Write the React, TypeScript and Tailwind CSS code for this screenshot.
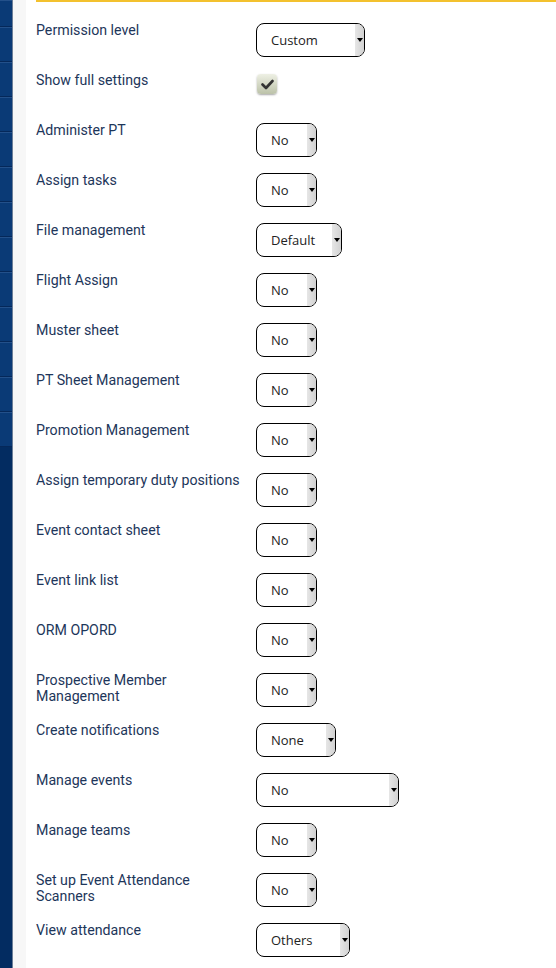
import React from "react";

type Row = { label: string; value?: string; width?: number; checkbox?: boolean };

const rows: Row[] = [
  { label: "Permission level", value: "Custom", width: 109 },
  { label: "Show full settings", checkbox: true },
  { label: "Administer PT", value: "No", width: 61 },
  { label: "Assign tasks", value: "No", width: 61 },
  { label: "File management", value: "Default", width: 86 },
  { label: "Flight Assign", value: "No", width: 61 },
  { label: "Muster sheet", value: "No", width: 61 },
  { label: "PT Sheet Management", value: "No", width: 61 },
  { label: "Promotion Management", value: "No", width: 61 },
  { label: "Assign temporary duty positions", value: "No", width: 61 },
  { label: "Event contact sheet", value: "No", width: 61 },
  { label: "Event link list", value: "No", width: 61 },
  { label: "ORM OPORD", value: "No", width: 61 },
  { label: "Prospective Member Management", value: "No", width: 61 },
  { label: "Create notifications", value: "None", width: 80 },
  { label: "Manage events", value: "No", width: 143 },
  { label: "Manage teams", value: "No", width: 61 },
  { label: "Set up Event Attendance Scanners", value: "No", width: 61 },
  { label: "View attendance", value: "Others", width: 94 },
];

function FakeSelect({ value, width }: { value: string; width: number }) {
  return (
    <div
      className="flex h-[34px] overflow-hidden rounded-[8px] border border-black bg-white"
      style={{ width }}
    >
      <span className="flex flex-1 items-center pl-[14px] pt-[2px] text-[13px] text-[#222] [font-family:'Open_Sans',sans-serif]">
        {value}
      </span>
      <span className="relative flex w-[9px] items-center justify-center bg-gradient-to-r from-[#e6e6e6] to-[#d2d2d2]">
        <span className="block h-0 w-0 border-x-[3px] border-t-[4px] border-x-transparent border-t-black" />
      </span>
    </div>
  );
}

function Checkbox() {
  return (
    <div className="ml-[1px] mt-[1px] flex h-[20px] w-[20px] items-center justify-center rounded-[4px] bg-gradient-to-b from-[#eef0e4] to-[#bcc2a9] shadow-[0_1px_2px_rgba(0,0,0,0.35)]">
      <svg width="13" height="11" viewBox="0 0 13 11">
        <path d="M1.5 5.5 L5 9 L11.5 2" fill="none" stroke="#333" strokeWidth="2.6" strokeLinecap="round" strokeLinejoin="round" />
      </svg>
    </div>
  );
}

export default function App() {
  const items = [27, 35, 35, 35, 35, 35, 35, 35, 35, 35, 35, 35, 35];
  return (
    <div className="flex min-h-[968px] w-[556px] overflow-hidden bg-white">
      <div className="flex w-[12px] shrink-0 flex-col bg-[#032c61]">
        {items.map((h, i) => (
          <div
            key={i}
            className="border-b border-t border-b-[#05285a] border-t-[#23508a] bg-[#0a3a76]"
            style={{ height: h }}
          />
        ))}
      </div>
      <div className="w-[1px] shrink-0 bg-[#6d7f98]" />
      <div className="w-[13px] shrink-0 bg-[#f7f7f7]" />
      <div className="w-[10px] shrink-0" />
      <div className="flex-1">
        <div className="h-[2px] bg-[#f3c12e]" />
        <div className="pt-[20px]">
          {rows.map((r) => (
            <div key={r.label} className="flex h-[50px] items-start">
              <div className="w-[220px] pr-[10px] text-[14.2px] leading-[16px] text-[#1d365a] [font-family:Roboto,sans-serif]">
                {r.label}
              </div>
              {r.checkbox ? (
                <div className="mt-[1px]">
                  <Checkbox />
                </div>
              ) : (
                <div className="mt-[1px]">
                  <FakeSelect value={r.value!} width={r.width!} />
                </div>
              )}
            </div>
          ))}
        </div>
      </div>
    </div>
  );
}
